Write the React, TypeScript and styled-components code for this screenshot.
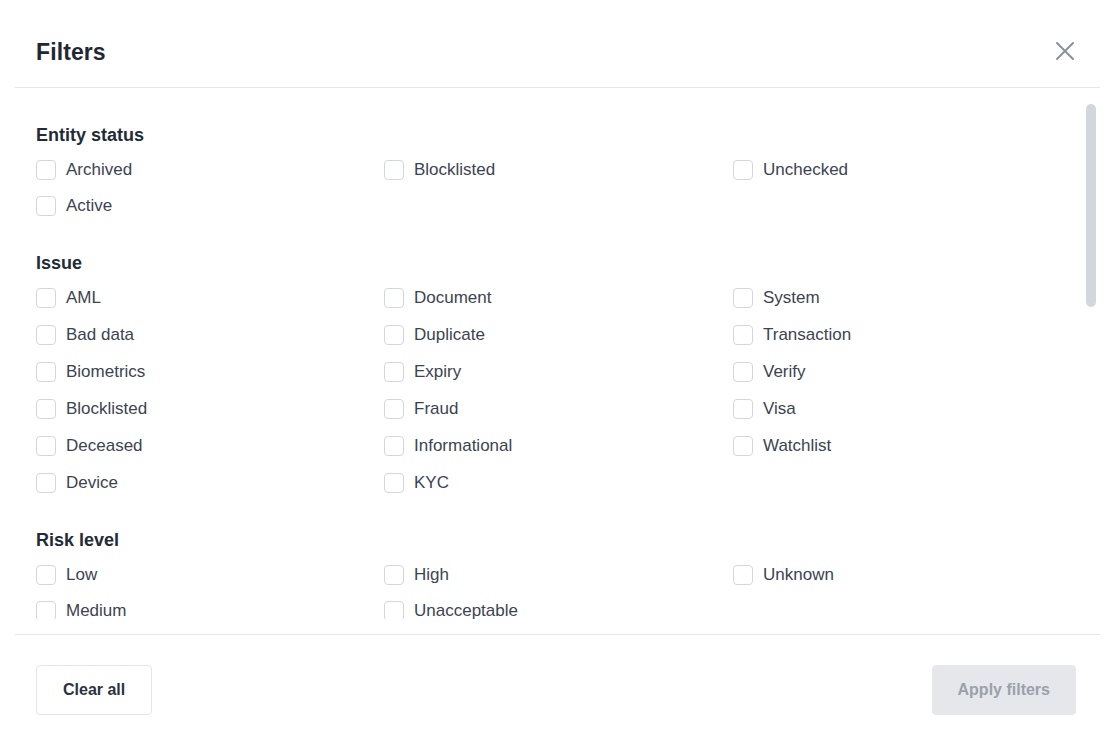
import React from "react";
import styled, { createGlobalStyle } from "styled-components";

const Global = createGlobalStyle`
  html, body { margin: 0; padding: 0; background: #ffffff; }
  body { font-family: "Liberation Sans", Arial, sans-serif; -webkit-font-smoothing: antialiased; }
  * { box-sizing: border-box; }
`;

const Dialog = styled.div`
  width: 1112px;
  height: 748px;
  padding: 0 12px 0 15px;
  display: flex;
  flex-direction: column;
  background: #fff;
`;

const Header = styled.header`
  height: 88px;
  padding: 17px 24px 0 21px;
  display: flex;
  align-items: center;
  justify-content: space-between;
  border-bottom: 1px solid #e5e7eb;
`;

const Title = styled.h1`
  margin: 0;
  font-size: 23px;
  font-weight: 700;
  color: #1f2833;
  letter-spacing: 0.1px;
`;

const CloseButton = styled.button`
  width: 22px;
  height: 22px;
  padding: 0;
  margin-top: -3px;
  border: 0;
  background: none;
  display: flex;
  align-items: center;
  justify-content: center;
  cursor: pointer;
  color: #8a909b;
`;

const BodyWrap = styled.div`
  position: relative;
  height: 531px;
  margin-bottom: 15px;
  overflow: hidden;
`;

const Scroller = styled.div`
  height: 100%;
  overflow: hidden;
  padding: 35px 18px 0 21px;
`;

const Thumb = styled.div`
  position: absolute;
  top: 16px;
  left: 1071px;
  width: 10px;
  height: 203px;
  border-radius: 5px;
  background: #d2d6dd;
`;

const Section = styled.section`
  margin-bottom: 35px;
`;

const SectionTitle = styled.h2`
  margin: 0 0 13px;
  font-size: 18px;
  line-height: 24px;
  font-weight: 700;
  color: #222b36;
`;

const Grid = styled.div<{ $gap: number }>`
  display: grid;
  grid-template-columns: 348px 349px 348px;
  row-gap: ${(p) => p.$gap}px;
`;

const Option = styled.label`
  display: flex;
  align-items: center;
  gap: 10px;
  height: 20px;
  font-size: 17px;
  color: #3c4451;
  cursor: pointer;
`;

const Box = styled.span`
  width: 20px;
  height: 20px;
  flex: none;
  border: 1px solid #d3d6dc;
  border-radius: 4px;
  background: #fff;
`;

const Footer = styled.footer`
  flex: 1;
  border-top: 1px solid #e5e7eb;
  padding: 30px 24px 0 21px;
  display: flex;
  justify-content: space-between;
  align-items: flex-start;
`;

const Button = styled.button<{ $primary?: boolean }>`
  height: 50px;
  padding: 0 ${(p) => (p.$primary ? "25px" : "26px")};
  border-radius: 4px;
  font-family: inherit;
  font-size: 16px;
  font-weight: 700;
  border: 1px solid ${(p) => (p.$primary ? "#e5e7eb" : "#e3e5e9")};
  background: ${(p) => (p.$primary ? "#e5e7eb" : "#ffffff")};
  color: ${(p) => (p.$primary ? "#9ba1ab" : "#2b3340")};
  cursor: ${(p) => (p.$primary ? "default" : "pointer")};
`;

const sections: { title: string; gap: number; items: string[] }[] = [
  { title: "Entity status", gap: 16, items: ["Archived", "Blocklisted", "Unchecked", "Active"] },
  {
    title: "Issue",
    gap: 17,
    items: [
      "AML", "Document", "System",
      "Bad data", "Duplicate", "Transaction",
      "Biometrics", "Expiry", "Verify",
      "Blocklisted", "Fraud", "Visa",
      "Deceased", "Informational", "Watchlist",
      "Device", "KYC",
    ],
  },
  { title: "Risk level", gap: 16, items: ["Low", "High", "Unknown", "Medium", "Unacceptable"] },
];

export default function App() {
  return (
    <>
      <Global />
      <Dialog>
        <Header>
          <Title>Filters</Title>
          <CloseButton aria-label="Close">
            <svg width="20" height="20" viewBox="0 0 20 20" fill="none" stroke="currentColor" strokeWidth="2" strokeLinecap="round">
              <path d="M2 2 L18 18 M18 2 L2 18" />
            </svg>
          </CloseButton>
        </Header>
        <BodyWrap>
          <Scroller>
            {sections.map((s) => (
              <Section key={s.title}>
                <SectionTitle>{s.title}</SectionTitle>
                <Grid $gap={s.gap}>
                  {s.items.map((it, i) => (
                    <Option key={it + i}>
                      <Box />
                      {it}
                    </Option>
                  ))}
                </Grid>
              </Section>
            ))}
          </Scroller>
          <Thumb />
        </BodyWrap>
        <Footer>
          <Button>Clear all</Button>
          <Button $primary>Apply filters</Button>
        </Footer>
      </Dialog>
    </>
  );
}
